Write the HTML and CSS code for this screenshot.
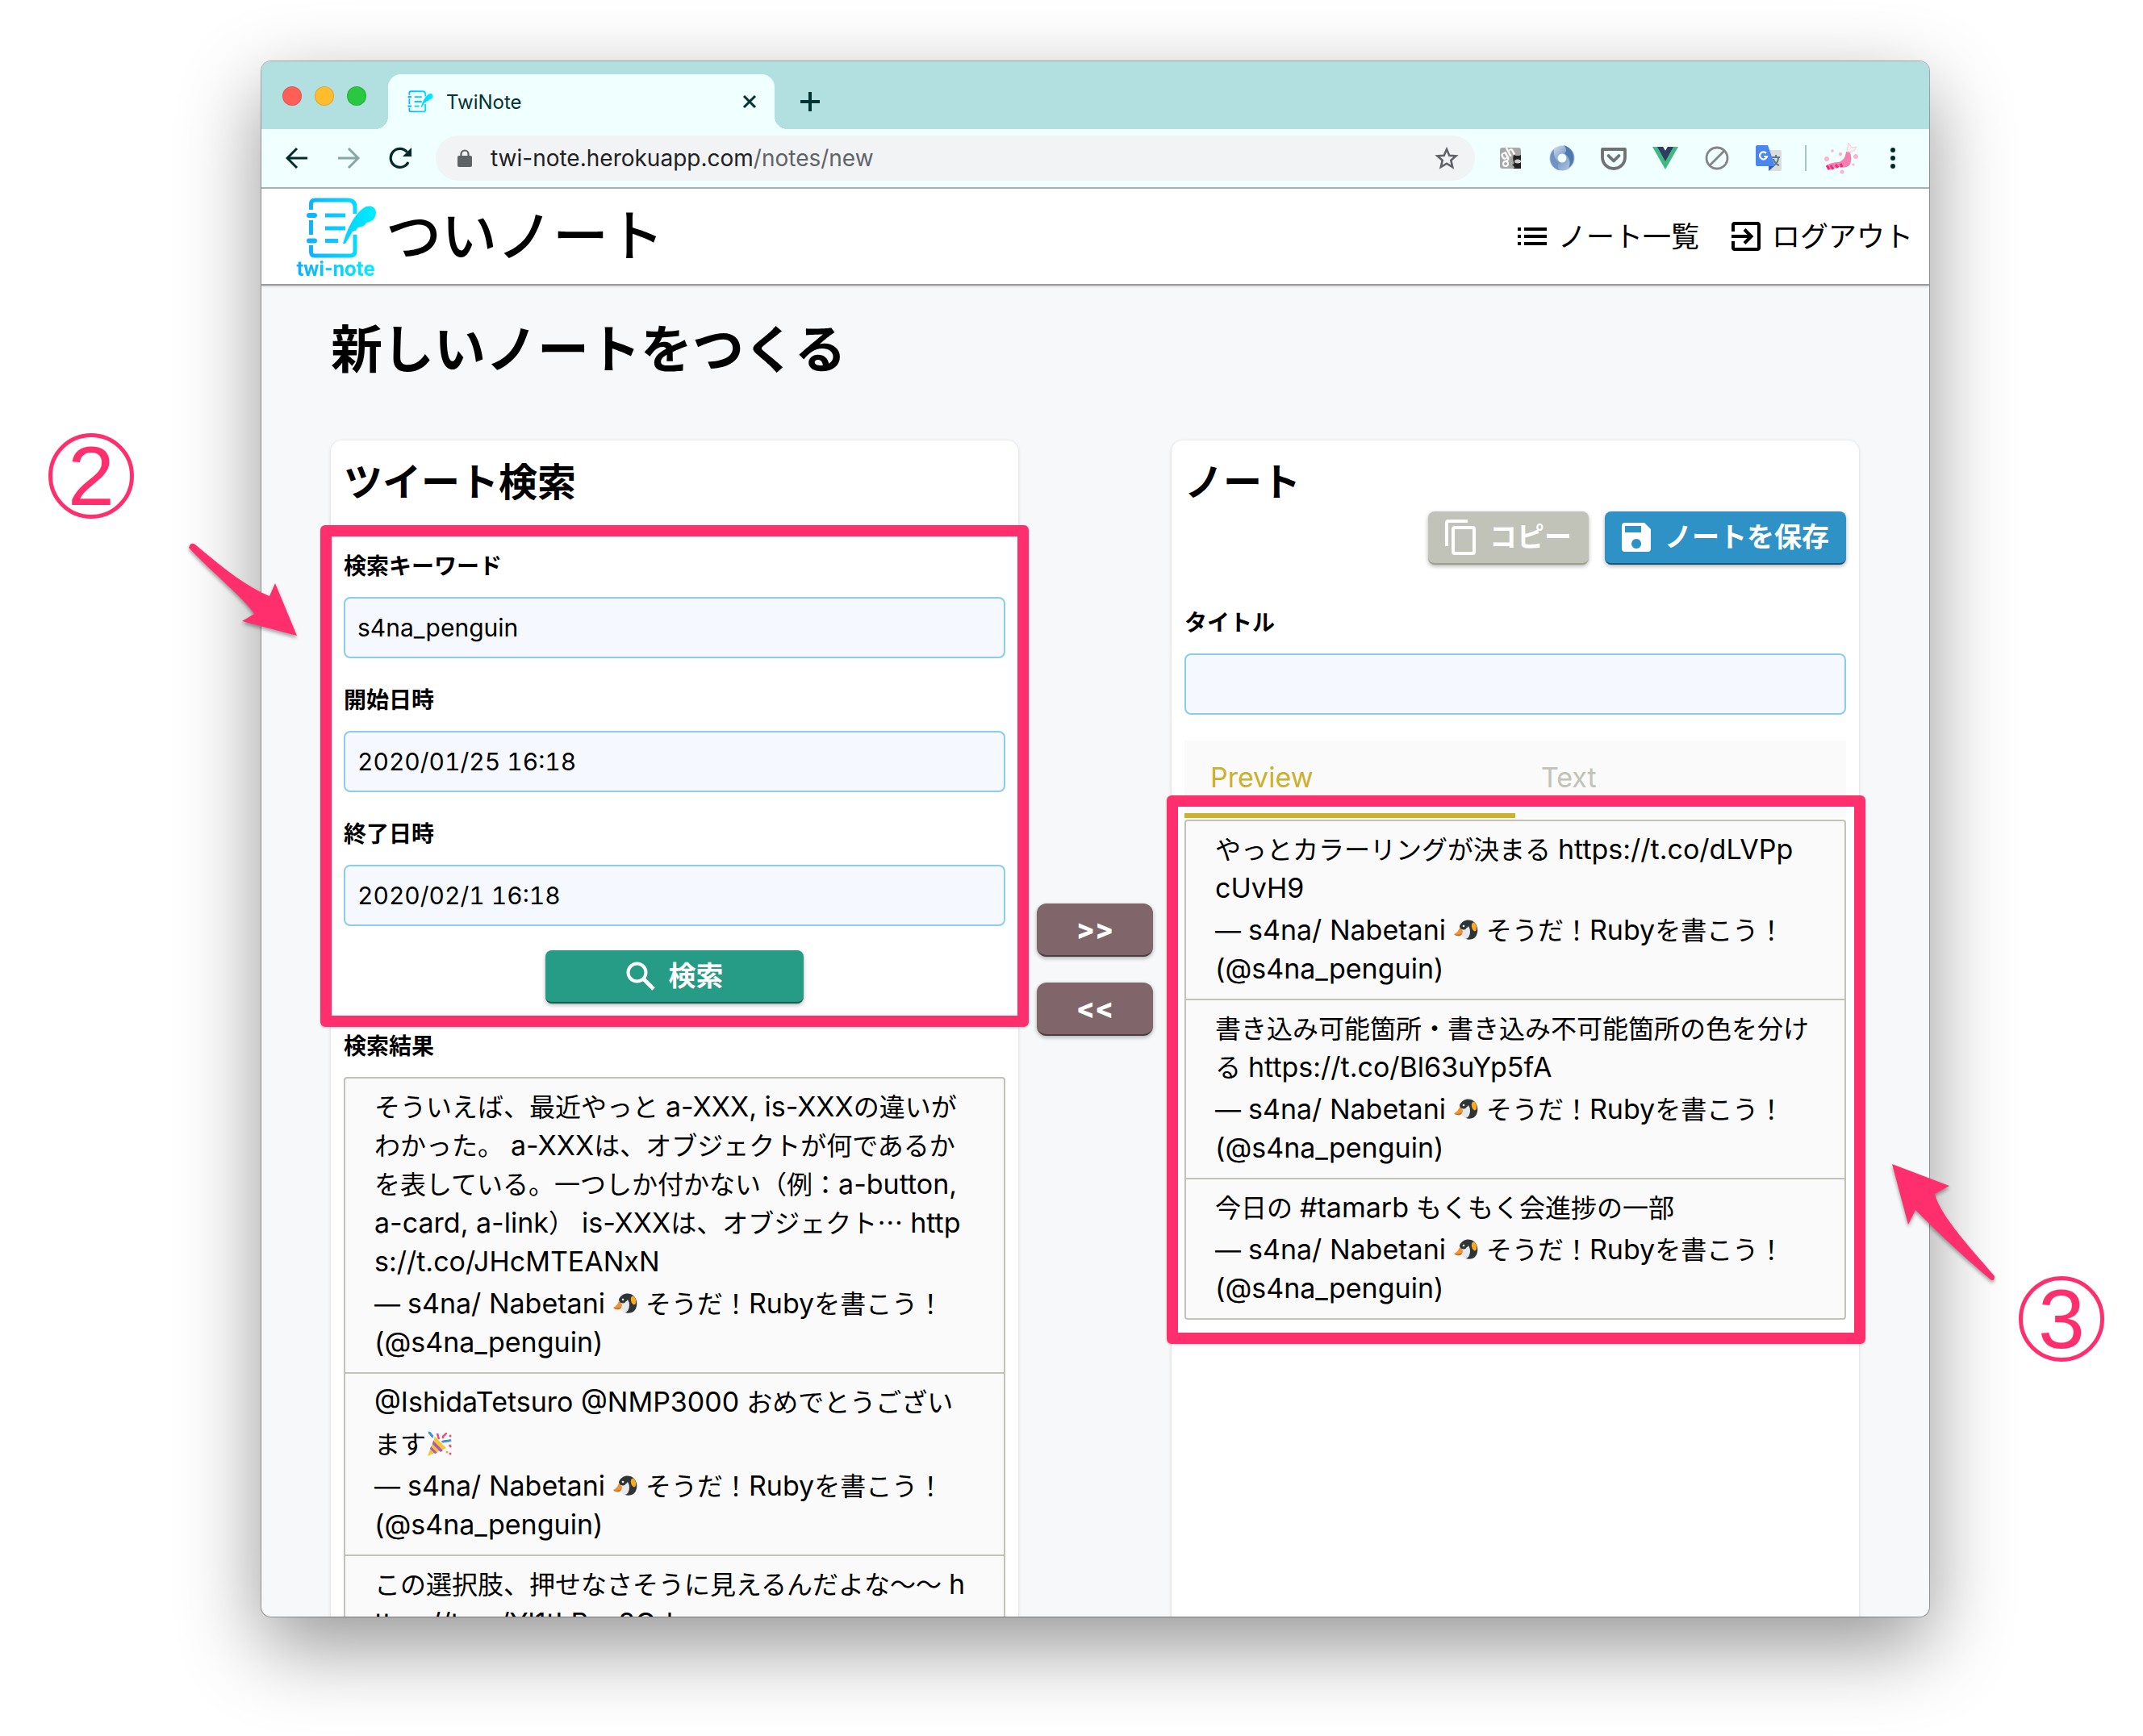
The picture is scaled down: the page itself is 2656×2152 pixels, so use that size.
FILE: index.html
```html
<!DOCTYPE html>
<html lang="ja">
<head>
<meta charset="utf-8">
<title>TwiNote</title>
<link rel="stylesheet" href="styles.css">
</head>
<body>
<svg class="defs" aria-hidden="true">
  <defs>
    <linearGradient id="brand" gradientUnits="userSpaceOnUse" x1="0" y1="0" x2="88" y2="0">
      <stop offset="0" stop-color="#12aeff"/><stop offset="1" stop-color="#00eeff"/>
    </linearGradient>
    <linearGradient id="ring" x1="0" y1="0" x2="1" y2="1">
      <stop offset="0" stop-color="#c3d3e8"/><stop offset=".5" stop-color="#7d9ec9"/><stop offset="1" stop-color="#a9c0de"/>
    </linearGradient>
    <symbol id="note" viewBox="0 0 88 76">
      <g fill="none" stroke="url(#brand)" stroke-width="5">
        <path d="M6.500 15V8q0-5 5-5H52q9 0 9 9v8M61 46V66q0 6-6 6H11q-4.500 0-4.500-5V59M6.500 28V46"/>
        <path d="M24 22H49M24 38H49M24 53.500H40"/>
        <path stroke-width="6" stroke-linecap="round" d="M4 22h7M4 53.500h7"/>
      </g>
      <path fill="url(#brand)" d="M46 57C51 40 58 24 70 14C77 8 86 10 87 18C87 26 82 30 75 31C73 36 69 36 64 37C64 41 60 41 58 42L49 57Z"/>
    </symbol>
    <symbol id="penguin" viewBox="0 0 32 32">
      <path fill="#2f3437" d="M8 11C11 3 21 1 27 7C32 13 31 22 26 26C21 29 14 28 12 23Z"/>
      <ellipse cx="15.500" cy="18" rx="5.500" ry="9" fill="#e6eaec"/>
      <path fill="#2f3437" d="M8 12C11 5 17 5 19 10C19 13 15 15 10 14Z"/>
      <circle cx="13" cy="12" r="3.500" fill="#2f3437"/>
      <circle cx="13" cy="11" r="1.300" fill="#fff"/>
      <ellipse cx="26" cy="12" rx="3" ry="5.500" fill="#f9a91b" transform="rotate(-14 26 12)"/>
      <path fill="#ef9435" d="M1 21Q6 19 8 13L12 17Q12 21 9 23Q4 24 1 21Z"/>
      <path fill="#c96c22" d="M1 21Q6 23 11 20Q10 23 8 23Q4 24 1 21Z"/>
    </symbol>
  </defs>
</svg>

<div class="window">
  <div class="tabstrip">
    <div class="lights"><i class="red"></i><i class="yellow"></i><i class="lime"></i></div>
    <div class="tab">
      <svg class="favicon"><use href="#note"/></svg>
      <span>TwiNote</span>
      <button class="plain close" aria-label="閉じる"><svg width="18" height="18" viewBox="0 0 18 18"><path d="M2 2 16 16M16 2 2 16" stroke="#033" stroke-width="3" fill="none"/></svg></button>
    </div>
    <button class="plain newtab" aria-label="新しいタブ"><svg width="24" height="24" viewBox="0 0 24 24"><path d="M12 0V24M0 12H24" stroke="#033" stroke-width="4"/></svg></button>
  </div>

  <div class="toolbar">
    <div class="history">
      <button class="plain" aria-label="戻る"><svg width="28" height="28" viewBox="0 0 28 28"><path d="M27 14H3M14 2 2 14 14 26" fill="none" stroke="#022a2a" stroke-width="3"/></svg></button>
      <button class="plain" aria-label="進む"><svg width="28" height="28" viewBox="0 0 28 28"><path d="M1 14H25M14 2 26 14 14 26" fill="none" stroke="#87a5a5" stroke-width="3"/></svg></button>
      <button class="plain" aria-label="再読み込み"><svg width="28" height="28" viewBox="0 0 28 28"><path d="M24 19A11.500 11.500 0 1 1 22.500 6.500" fill="none" stroke="#022a2a" stroke-width="3.200"/><path d="M28 1V12H17z" fill="#022a2a"/></svg></button>
    </div>
    <div class="address">
      <svg width="18" height="22" viewBox="0 0 18 22"><rect y="8" width="18" height="14" rx="2" fill="#5f6368"/><path d="M4.500 9V6a4.500 4.500 0 0 1 9 0V9" fill="none" stroke="#5f6368" stroke-width="2.200"/></svg>
      <span class="url">twi-note.herokuapp.com<em>/notes/new</em></span>
      <svg width="30" height="30" viewBox="0 0 30 30"><path d="M15 4l3.300 7.700 8.200.7-6.200 5.400 1.900 8.200L15 21.700 7.800 26l1.900-8.200L3.500 12.400l8.200-.7z" fill="none" stroke="#5f6368" stroke-width="2.600"/></svg>
    </div>
    <div class="extensions">
      <svg viewBox="0 0 32 32"><rect x="3" y="3" width="26" height="26" rx="3" fill="#a8a8a8"/><text x="5" y="16" font-family="Roboto" font-weight="700" font-size="16" fill="#fff" transform="rotate(-28 12 14)">gh</text><circle cx="10" cy="23" r="3" fill="none" stroke="#fff" stroke-width="2"/><path d="M20 12l3 1h4l2-1v17H19c4-1 1-3-1-5c2 0 3-1 2-3c-1-3-1-6 0-9z" fill="#222"/><ellipse cx="25" cy="20" rx="4" ry="2.500" fill="#ccc"/></svg>
      <svg viewBox="0 0 32 32"><ellipse cx="16" cy="16" rx="10.500" ry="10.500" fill="none" stroke="url(#ring)" stroke-width="10"/><path d="M18 0C31 4 35 20 24 28C28 20 24 14 19 10C22 8 22 4 18 0z" fill="#4f79ae"/><path d="M13 31C2 28-3 13 6 5C5 13 8 19 13 22C10 24 10 28 13 31z" fill="#6f93c2"/></svg>
      <svg viewBox="0 0 32 32"><path d="M2 5h28v10a14 14 0 0 1-28 0z" fill="none" stroke="#717171" stroke-width="3.800" stroke-linejoin="round"/><path d="M9.500 13l6.500 6.500 6.500-6.500" fill="none" stroke="#717171" stroke-width="3.800" stroke-linecap="round" stroke-linejoin="round"/></svg>
      <svg viewBox="0 0 32 32"><path d="M0 2h13l3 5 3-5h13L16 30z" fill="#41b883"/><path d="M6 2h7l3 5 3-5h7L16 20z" fill="#2f3b60"/></svg>
      <svg viewBox="0 0 32 32"><circle cx="16" cy="16" r="13" fill="none" stroke="#858585" stroke-width="2.800"/><path d="M7 25 25 7" stroke="#858585" stroke-width="2.800"/></svg>
      <svg viewBox="0 0 32 32"><path d="M12 6h18q2 0 2 2v22q0 2-2 2H18z" fill="#dcdcdc"/><path d="M20 15h10M25 12v3M22 25c4-2 6-5 6-10M22 17c1 4 4 7 7 8" stroke="#567c88" stroke-width="2" fill="none"/><path d="M16 26h7l-7 6z" fill="#3a5bc0"/><path d="M2 0h13l9 26H2q-2 0-2-2V2q0-2 2-2z" fill="#4a86ee"/><path d="M13 10a4.500 4.500 0 1 0 1 4h-4" fill="none" stroke="#fff" stroke-width="2.200"/></svg>
    </div>
    <span class="divider"></span>
    <svg class="avatar" viewBox="0 0 44 40"><path d="M3 29c5-3 9-4 15-4c5-2 8-5 9-13l5 1c2 6 2 13-2 17c-5 2-8 2-12 1l-13 4z" fill="#f47fb0"/><path d="M3 29l3 5M8 29l3 5M14 28l3 4M20 27l2 4" stroke="#e8307c" stroke-width="3"/><path d="M28 10l2-9 4 6 6-1-3 5-6 2z" fill="#fdeef2" stroke="#f3c3d0" stroke-width=".8"/><g fill="#f9b4cf"><circle cx="3" cy="21" r="3"/><circle cx="10" cy="11" r="1.800"/><circle cx="20" cy="15" r="2.200"/><circle cx="39" cy="18" r="3"/><circle cx="22" cy="37" r="2.500"/><circle cx="36" cy="28" r="1.500"/></g></svg>
    <button class="plain" aria-label="メニュー"><svg width="6" height="26" viewBox="0 0 6 26" fill="#022a2a"><circle cx="3" cy="3" r="3"/><circle cx="3" cy="13" r="3"/><circle cx="3" cy="23" r="3"/></svg></button>
  </div>

  <div class="page">
    <header class="site-header">
      <a class="brand" href="#">
        <span class="logo"><svg><use href="#note"/></svg><b>twi-note</b></span>
        <span class="brand-name">ついノート</span>
      </a>
      <nav>
        <a href="#"><svg width="36" height="22" viewBox="0 0 36 22"><path d="M0 2h4M0 11h4M0 20h4M8 2H36M8 11H36M8 20H36" stroke="#000" stroke-width="4"/></svg>ノート一覧</a>
        <a href="#"><svg width="36" height="36" viewBox="0 0 36 36"><path d="M2 12V4q0-2 2-2H32q2 0 2 2V32q0 2-2 2H4q-2 0-2-2V24" fill="none" stroke="#000" stroke-width="4"/><path d="M0 18H25M16 9.500 24.500 18 16 26.500" fill="none" stroke="#000" stroke-width="4"/></svg>ログアウト</a>
      </nav>
    </header>

    <main>
      <h1>新しいノートをつくる</h1>
      <div class="columns">
        <section class="card">
          <h2>ツイート検索</h2>
          <form class="search">
            <div class="field"><label for="keyword">検索キーワード</label><input id="keyword" type="text" value="s4na_penguin"></div>
            <div class="field"><label for="from">開始日時</label><input id="from" type="text" value="2020/01/25 16:18"></div>
            <div class="field"><label for="to">終了日時</label><input id="to" type="text" value="2020/02/1 16:18"></div>
            <button class="btn green wide" type="button"><svg width="36" height="36" viewBox="0 0 36 36"><circle cx="13.500" cy="13.500" r="11" fill="none" stroke="#fff" stroke-width="4"/><path d="M21 21 34 34" stroke="#fff" stroke-width="5"/></svg>検索</button>
            <div class="marker"></div>
          </form>
          <h3>検索結果</h3>
          <ul class="tweets">
            <li>
              <p>そういえば、最近やっと <span class="en">a-XXX, is-XXX</span>の違いが<br>わかった。 <span class="en">a-XXX</span>は、オブジェクトが何であるか<br>を表している。一つしか付かない（例：<span class="en">a-button,</span><br><span class="en">a-card, a-link</span>） <span class="en">is-XXX</span>は、オブジェクト<span class="ja">…</span> <span class="en">http</span><br><span class="en">s://t.co/JHcMTEANxN</span></p>
              <p class="by">— <span class="en">s4na/ Nabetani</span> <svg class="emoji"><use href="#penguin"/></svg> そうだ！<span class="en">Ruby</span>を書こう！</p>
              <p><span class="en">(@s4na_penguin)</span></p>
            </li>
            <li>
              <p><span class="en">@IshidaTetsuro @NMP3000</span> おめでとうござい</p>
              <p class="by">ます<svg class="emoji" viewBox="0 0 32 32"><path d="M11 7 25 21 2 31z" fill="#f8c62c"/><path d="M9 12l12 12-3 2L8 16zM6 19l8 8-3 1-6-6z" fill="#a757c9"/><path d="M3 2c4 0 2 4 6 5M20 14c2-3 6 0 11-3" stroke="#3e8fe0" stroke-width="3" fill="none"/><path d="M14 3l2 7M25 2c0 4-5 2-4 7M29 17l2 3" stroke="#ee4a7b" stroke-width="2.500" fill="none"/><circle cx="30" cy="6" r="1.500" fill="#ee4a7b"/><circle cx="26" cy="26" r="1.500" fill="#f5a623"/><circle cx="30" cy="28" r="1.500" fill="#ee4a7b"/></svg></p>
              <p class="by">— <span class="en">s4na/ Nabetani</span> <svg class="emoji"><use href="#penguin"/></svg> そうだ！<span class="en">Ruby</span>を書こう！</p>
              <p><span class="en">(@s4na_penguin)</span></p>
            </li>
            <li>
              <p>この選択肢、押せなさそうに見えるんだよな〜〜 <span class="en">h</span><br><span class="en">ttps://t.co/Yl1tLBxs8Od</span></p>
            </li>
          </ul>
        </section>

        <div class="transfer">
          <button class="btn mauve" type="button">&gt;&gt;</button>
          <button class="btn mauve" type="button">&lt;&lt;</button>
        </div>

        <section class="card">
          <h2>ノート</h2>
          <div class="actions">
            <button class="btn gray" type="button"><svg width="38" height="44" viewBox="0 0 38 44"><path d="M2 33V4q0-2 2-2H28" fill="none" stroke="#fff" stroke-width="4"/><rect x="10" y="10" width="26" height="32" rx="2" fill="none" stroke="#fff" stroke-width="4"/></svg>コピー</button>
            <button class="btn blue" type="button"><svg width="36" height="36" viewBox="0 0 36 36"><path fill="#fff" fill-rule="evenodd" d="M4 0H28L36 8V32q0 4-4 4H4q-4 0-4-4V4Q0 0 4 0zM4 4V12H24V4zM18 20a6 6 0 1 0 .1 0z"/></svg>ノートを保存</button>
          </div>
          <div class="field"><label for="title">タイトル</label><input id="title" type="text"></div>
          <div class="tabs" role="tablist">
            <button role="tab" aria-selected="true" type="button">Preview</button>
            <button role="tab" aria-selected="false" type="button">Text</button>
          </div>
          <div class="preview">
            <ul class="tweets">
              <li>
                <p>やっとカラーリングが決まる <span class="en">https://t.co/dLVPp</span><br><span class="en">cUvH9</span></p>
                <p class="by">— <span class="en">s4na/ Nabetani</span> <svg class="emoji"><use href="#penguin"/></svg> そうだ！<span class="en">Ruby</span>を書こう！</p>
                <p><span class="en">(@s4na_penguin)</span></p>
              </li>
              <li>
                <p>書き込み可能箇所・書き込み不可能箇所の色を分け<br>る <span class="en">https://t.co/Bl63uYp5fA</span></p>
                <p class="by">— <span class="en">s4na/ Nabetani</span> <svg class="emoji"><use href="#penguin"/></svg> そうだ！<span class="en">Ruby</span>を書こう！</p>
                <p><span class="en">(@s4na_penguin)</span></p>
              </li>
              <li>
                <p>今日の <span class="en">#tamarb</span> もくもく会進捗の一部</p>
                <p class="by">— <span class="en">s4na/ Nabetani</span> <svg class="emoji"><use href="#penguin"/></svg> そうだ！<span class="en">Ruby</span>を書こう！</p>
                <p><span class="en">(@s4na_penguin)</span></p>
              </li>
            </ul>
            <div class="marker list-marker"></div>
          </div>
        </section>
      </div>
    </main>
  </div>
</div>

<div class="step step-two">2</div>
<svg class="arrow arrow-two" viewBox="0 0 140 124"><path d="M4 10Q6 2 12 6C45 34 75 58 104 70L111 54 138 119 70 101 85 92C72 72 38 46 4 10z"/></svg>
<svg class="arrow arrow-three" viewBox="0 0 140 154"><path d="M5 3 76 30 58 40C64 68 114 120 132 142Q132 149 127 146C96 120 66 92 34 60L25 78z"/></svg>
<div class="step step-three">3</div>
</body>
</html>
```
FILE: styles.css
```css
* { box-sizing: border-box; }

body {
  position: relative;
  margin: 0;
  min-height: 100vh;
  padding: 76px 265px 148px 324px;
  background: #fff;
  color: #000;
  font-family: Inter, "Noto Sans CJK JP", sans-serif;
  font-size: 32px;
  overflow: hidden;
}

svg { display: block; flex: none; }
.defs { position: absolute; width: 0; height: 0; }
h1, h2, h3, p, ul { margin: 0; padding: 0; }
a { color: inherit; text-decoration: none; }
button, input { font: inherit; color: inherit; }
.plain { padding: 0; border: 0; background: none; }

/* browser window */
.window {
  display: flex;
  flex-direction: column;
  height: calc(100vh - 224px);
  border-radius: 12px;
  overflow: hidden;
  background: #f7f8fa;
  box-shadow: 0 0 0 1px rgba(0, 0, 0, .3), 0 36px 100px rgba(0, 0, 0, .42);
}

.tabstrip {
  display: flex;
  align-items: flex-end;
  flex: none;
  height: 84px;
  padding-left: 26px;
  background: #b2dfdf;
}
.lights { display: flex; gap: 16px; width: 131px; padding-bottom: 29px; }
.lights i { width: 24px; height: 24px; border-radius: 50%; border: 1px solid rgba(0, 0, 0, .12); }
.red { background: #ff5f57; }
.yellow { background: #ffbd2e; }
.lime { background: #28c840; }

.tab {
  position: relative;
  display: flex;
  align-items: center;
  gap: 16px;
  width: 479px;
  height: 68px;
  padding: 0 22px 0 24px;
  border-radius: 16px 16px 0 0;
  background: #f0ffff;
  color: #033;
  font-size: 24px;
}
.tab::before, .tab::after {
  content: "";
  position: absolute;
  bottom: 0;
  width: 16px;
  height: 16px;
}
.tab::before { left: -16px; background: radial-gradient(circle at 0 0, transparent 16px, #f0ffff 16px); }
.tab::after { right: -16px; background: radial-gradient(circle at 100% 0, transparent 16px, #f0ffff 16px); }
.favicon { width: 32px; height: 28px; }
.close { margin-left: auto; }
.newtab { margin-left: 32px; padding-bottom: 22px; }

.toolbar {
  display: flex;
  align-items: center;
  flex: none;
  height: 74px;
  padding: 0 42px 0 30px;
  border-bottom: 2px solid #a6b1b1;
  background: #f0ffff;
}
.history { display: flex; gap: 36px; width: 186px; }
.address {
  display: flex;
  align-items: center;
  flex: 1;
  gap: 23px;
  height: 56px;
  padding: 0 20px 0 27px;
  border-radius: 28px;
  background: #f1f3f4;
}
.url { flex: 1; color: #202124; font-size: 28px; }
.url em { color: #5f6368; font-style: normal; }
.extensions { display: flex; gap: 32px; padding: 0 29px 0 28px; }
.extensions svg { width: 32px; height: 32px; }
.divider { width: 2px; height: 32px; background: #a9c4c4; }
.avatar { width: 44px; height: 40px; margin: 0 38px 0 22px; }

/* site */
.page { flex: 1; min-height: 0; overflow: hidden; }
.site-header {
  position: relative;
  display: flex;
  align-items: center;
  justify-content: space-between;
  height: 120px;
  padding: 0 20px 0 40px;
  border-bottom: 2px solid #999;
  background: #fff;
  box-shadow: 0 1px 3px rgba(0, 0, 0, .2);
}
.brand { display: flex; align-items: center; gap: 10px; }
.logo { display: flex; flex-direction: column; align-items: center; width: 104px; padding-top: 4px; }
.logo svg { width: 88px; height: 76px; margin-left: 14px; }
.logo b {
  background: linear-gradient(90deg, #12aeff, #00eeff);
  background-clip: text;
  color: transparent;
  font-family: Roboto, sans-serif;
  font-size: 26px;
  line-height: 24px;
}
.brand-name { font-size: 69px; font-weight: 500; line-height: 96px; }
nav { display: flex; gap: 40px; }
nav a { display: flex; align-items: center; gap: 14px; font-size: 35px; line-height: 48px; }

main { padding: 31px 87px 64px 86px; }
h1 { margin-bottom: 65px; font-size: 64px; line-height: 96px; }
.columns { display: grid; grid-template-columns: 1fr 190px 1fr; }
.card {
  padding: 16px;
  border-radius: 14px;
  background: #fff;
  box-shadow: 0 1px 4px rgba(0, 0, 0, .16);
}
h2 { font-size: 48px; line-height: 72px; }
h3, label { display: block; margin-bottom: 16px; font-size: 28px; font-weight: 700; line-height: 44px; }

.search {
  position: relative;
  display: flex;
  flex-direction: column;
  gap: 30px;
  margin: 46px 0 31px;
}
.field input {
  display: block;
  width: 100%;
  height: 76px;
  padding: 0 15px;
  border: 2px solid #8accee;
  border-radius: 8px;
  background: #f5f9ff;
  font-size: 30px;
  font-variant-numeric: tabular-nums;
}

.btn {
  display: flex;
  align-items: center;
  justify-content: center;
  gap: 17px;
  height: 66px;
  padding: 0 21px;
  border: 0;
  border-bottom: 2px solid rgba(0, 0, 0, .4);
  border-radius: 8px;
  box-shadow: 0 2px 5px rgba(0, 0, 0, .3);
  color: #fff;
  font-size: 34px;
  font-weight: 700;
  line-height: 48px;
}
.btn.green { background: #269b86; }
.btn.gray { border-color: #9d9f8c; background: #c1c3b8; }
.btn.blue { background: #2e92c7; }
.btn.mauve { width: 144px; border-radius: 12px; background: #80666b; font-weight: 800; }
.wide { align-self: center; width: 320px; }

.transfer {
  display: flex;
  flex-direction: column;
  align-items: center;
  gap: 32px;
  padding-top: 574px;
}
.actions { display: flex; justify-content: flex-end; gap: 20px; margin-bottom: 50px; }

.tabs { display: flex; height: 96px; margin: 32px 0 2px; background: #fafafa; }
.tabs button {
  flex: 1;
  padding: 0 32px;
  border: 0;
  border-bottom: 6px solid transparent;
  background: none;
  color: #c1c3b8;
  font-size: 34px;
  text-align: left;
}
.tabs button[aria-selected="true"] { border-color: #cbb12d; color: #cbb12d; }

.preview { position: relative; }
.tweets { list-style: none; border: 2px solid #c1c3b8; border-radius: 4px; background: #fafafa; }
.tweets li { padding: 12px 16px 12px 36px; line-height: 48px; white-space: nowrap; }
.tweets li + li { border-top: 2px solid #c1c3b8; }
.tweets .by { padding-top: 4px; }
.emoji { display: inline-block; width: 32px; height: 32px; vertical-align: -4px; }
/* Latin runs are set a step larger beside the Japanese text */
.en { font-size: 34px; line-height: 0; }
.ja { font-family: "Noto Sans CJK JP", sans-serif; line-height: 0; }

/* annotations */
.marker {
  position: absolute;
  inset: -29px;
  border: 14px solid #ff2f6e;
  border-radius: 6px;
  box-shadow: 0 1px 3px rgba(0, 0, 0, .2);
  pointer-events: none;
}
.list-marker { inset: -30px -24px -30px -22px; }
.step {
  position: absolute;
  width: 106px;
  height: 106px;
  border: 5px solid #ff2f6e;
  border-radius: 50%;
  color: #ff2f6e;
  font-family: "Liberation Sans", sans-serif;
  font-size: 104px;
  line-height: 96px;
  text-align: center;
}
.step-two { left: 60px; top: 537px; }
.step-three { right: 48px; top: 1582px; }
.arrow { position: absolute; fill: #ff2f6e; filter: drop-shadow(0 3px 2px rgba(0, 0, 0, .35)); }
.arrow-two { left: 230px; top: 669px; width: 140px; height: 124px; }
.arrow-three { right: 176px; top: 1440px; width: 140px; height: 154px; }
```
